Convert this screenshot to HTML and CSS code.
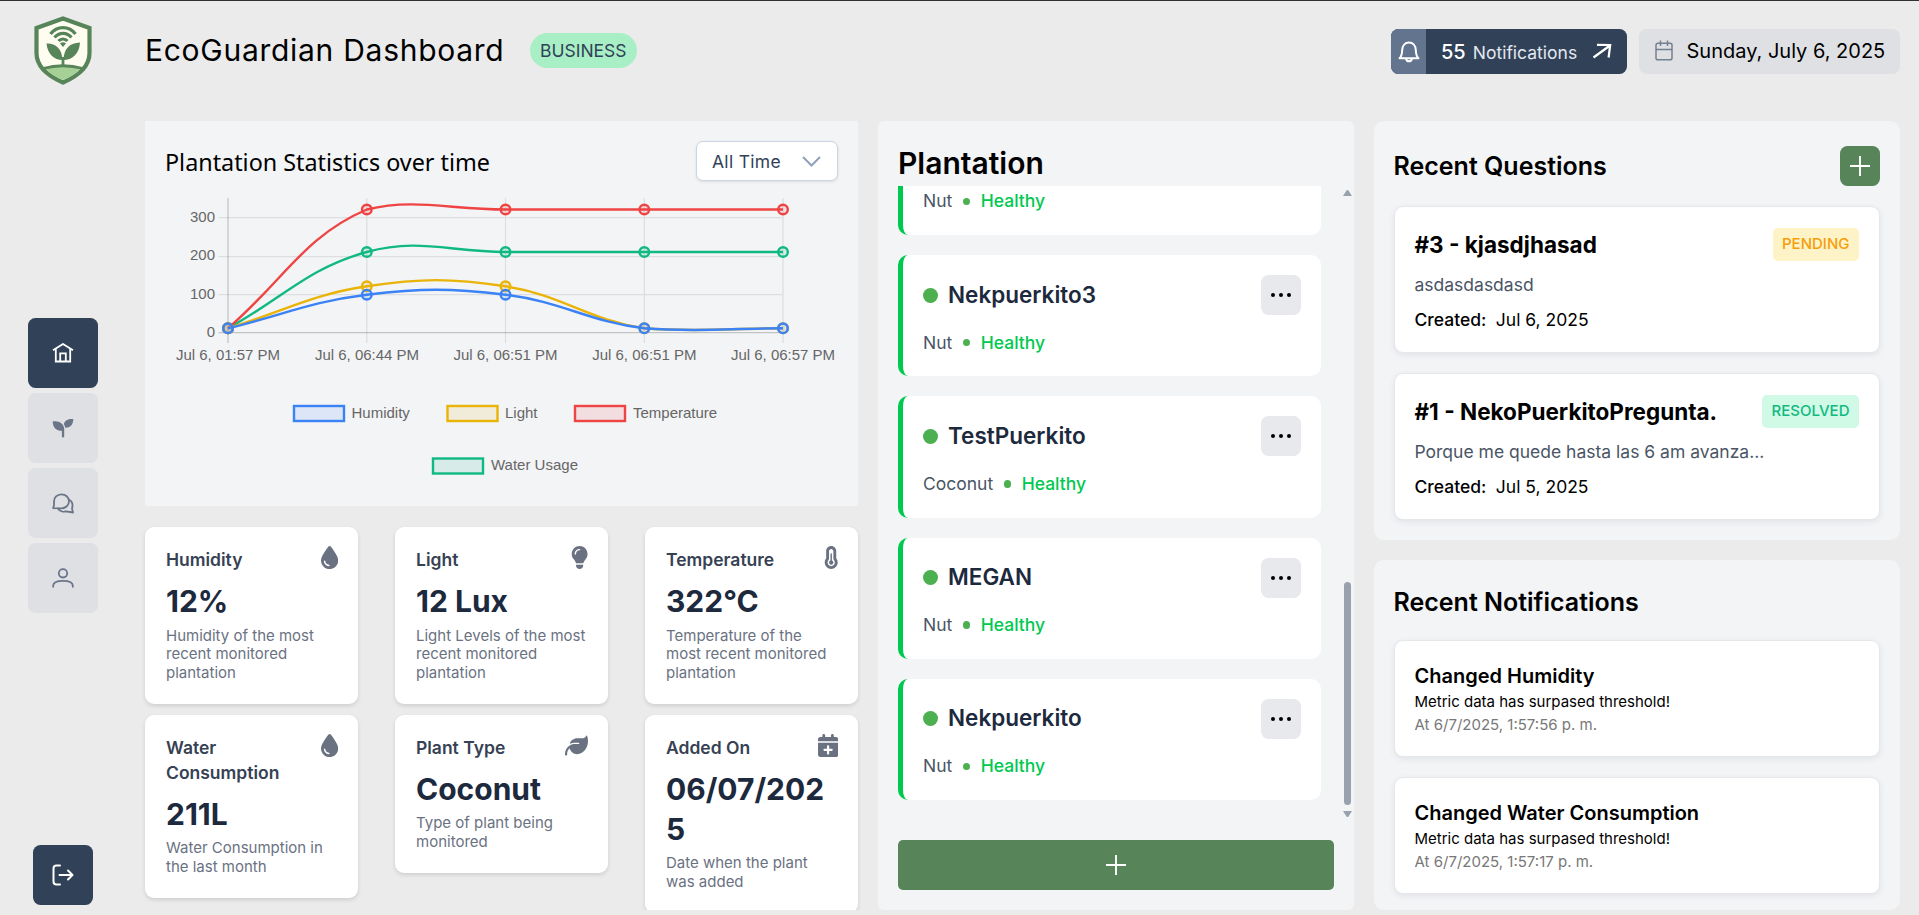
FILE: index.html
```html
<!DOCTYPE html>
<html lang="en">
<head>
<meta charset="utf-8">
<title>EcoGuardian Dashboard</title>
<link rel="stylesheet" href="styles.css">
</head>
<body>
<svg class="sprite" aria-hidden="true">
  <symbol id="drop" viewBox="0 0 384 512"><path d="M192 512C86 512 0 426 0 320C0 228.800 130.200 57.700 166.600 11.700C172.600 4.200 181.500 0 191.100 0h1.800c9.600 0 18.500 4.200 24.500 11.700C253.800 57.700 384 228.800 384 320c0 106-86 192-192 192zM96 336c0-8.800-7.200-16-16-16s-16 7.200-16 16c0 61.900 50.100 112 112 112c8.800 0 16-7.200 16-16s-7.200-16-16-16c-44.200 0-80-35.800-80-80z"/></symbol>
  <symbol id="bulb" viewBox="0 0 384 512"><path d="M272 384c9.600-31.900 29.500-59.100 49.200-86.200c5.200-7.100 10.400-14.200 15.400-21.400c19.800-28.500 31.400-63 31.400-100.300C368 78.800 289.200 0 192 0S16 78.800 16 176c0 37.300 11.600 71.900 31.400 100.300c5 7.200 10.200 14.300 15.400 21.400c19.800 27.100 39.700 54.400 49.200 86.200H272zM192 512c44.200 0 80-35.800 80-80V416H112v16c0 44.200 35.800 80 80 80zM112 176c0 8.800-7.200 16-16 16s-16-7.200-16-16c0-61.900 50.100-112 112-112c8.800 0 16 7.200 16 16s-7.200 16-16 16c-44.200 0-80 35.800-80 80z"/></symbol>
  <symbol id="thermo" viewBox="0 0 320 512"><path d="M160 64c-26.500 0-48 21.500-48 48V276.500c0 17.300-7.100 31.900-15.300 42.500C86.200 332.600 80 349.500 80 368c0 44.200 35.800 80 80 80s80-35.800 80-80c0-18.500-6.200-35.400-16.700-48.900c-8.200-10.600-15.300-25.200-15.300-42.500V112c0-26.500-21.500-48-48-48zM48 112C48 50.200 98.100 0 160 0s112 50.100 112 112V276.500c0 .1 .1 .3 .2 .6c.2 .6 .8 1.600 1.700 2.800c18.900 24.400 30.100 55 30.100 88.100c0 79.500-64.500 144-144 144S16 447.500 16 368c0-33.200 11.200-63.800 30.100-88.100c.9-1.200 1.500-2.200 1.700-2.800c.1-.3 .2-.5 .2-.6V112zM208 368c0 26.500-21.500 48-48 48s-48-21.500-48-48c0-20.900 13.400-38.700 32-45.300V176c0-8.800 7.200-16 16-16s16 7.200 16 16V322.700c18.600 6.600 32 24.400 32 45.300z"/></symbol>
  <symbol id="leaf" viewBox="0 0 512 512"><path d="M272 96c-78.600 0-145.100 51.500-167.700 122.500c33.600-17 71.500-26.500 111.700-26.500h88c8.800 0 16 7.200 16 16s-7.200 16-16 16H216c-16.600 0-32.700 1.900-48.200 5.400c-25.900 5.900-50 16.400-71.400 30.700C38.300 298.800 0 364.900 0 440v16c0 13.300 10.700 24 24 24s24-10.700 24-24V440c0-48.700 20.700-92.500 53.800-123.200C121.600 392.300 190.300 448 272 448h1c132.100-.7 239-130.900 239-291.400c0-42.600-7.500-83.100-21.100-119.600c-2.600-6.900-12.700-6.600-16.200-.1C455.900 72.100 418.700 96 376 96z"/></symbol>
  <symbol id="calplus" viewBox="0 0 448 512"><path d="M96 32V64H48C21.500 64 0 85.500 0 112v48H448V112c0-26.500-21.500-48-48-48H352V32c0-17.700-14.300-32-32-32s-32 14.300-32 32V64H160V32c0-17.700-14.300-32-32-32S96 14.300 96 32zM448 192H0V464c0 26.500 21.500 48 48 48H400c26.500 0 48-21.500 48-48V192zM224 248c13.300 0 24 10.700 24 24v56h56c13.300 0 24 10.700 24 24s-10.700 24-24 24H248v56c0 13.300-10.700 24-24 24s-24-10.700-24-24V376H144c-13.300 0-24-10.700-24-24s10.700-24 24-24h56V272c0-13.300 10.700-24 24-24z"/></symbol>
  <symbol id="dots" viewBox="0 0 22 6"><circle cx="3" cy="3" r="2"/><circle cx="11" cy="3" r="2"/><circle cx="19" cy="3" r="2"/></symbol>
  <symbol id="plus" viewBox="0 0 20 20"><path d="M10 0V20M0 10H20"/></symbol>
</svg>

<div class="app">
  <aside class="sidebar">
    <svg class="logo" viewBox="0 0 58 69">
      <path d="M29 2.500L55.500 12V37C55.500 51 44 60 29 66.500C14 60 2.500 51 2.500 37V12Z" fill="#fffdf0" stroke="#578459" stroke-width="4.200"/>
      <path d="M11 52.500Q29 48 47 52.500Q40 59.500 29 64Q18 59.500 11 52.500Z" fill="#a5d196"/>
      <path d="M9 52.500Q29 47 49 52.500" fill="none" stroke="#578459" stroke-width="2.800"/>
      <path d="M29 51V41" stroke="#578459" stroke-width="2.800"/>
      <path d="M28.500 44C20 44 13.500 38 12.500 27.500C21 27 28 32 28.500 44ZM29.500 44C38 44 45.500 38 46 26.500C36 27 30 32 29.500 44Z" fill="#578459"/>
      <g fill="none" stroke="#578459" stroke-width="3.200"><path d="M16.500 18C23 9.500 35 9.500 41.500 18"/><path d="M20.500 21.500C25 16 33 16 37.500 21.500"/><path d="M24.500 25C27 22.300 31 22.300 33.500 25"/></g>
      <path d="M29 31L26 27.500Q29 25 32 27.500Z" fill="#578459"/>
    </svg>
    <nav class="nav">
      <a class="nav-item active"><svg width="22" height="20" viewBox="0 0 22 20"><path d="M1 7.200L11 1L21 7.200M3.800 6V18.500H18.200V6M8.200 18.500V10.300H13.800V18.500"/></svg></a>
      <a class="nav-item filled"><svg width="22" height="20" viewBox="0 0 22 20"><path d="M.7 3.500C7 2.300 12 5.800 12.200 11V18.500Q12.200 19.500 11 19.500Q9.900 19.500 9.900 18.500V12.800C4.300 12.800.7 9.500.7 3.500ZM21.300 1C15.500.3 12.300 3 11.900 6.200Q13 7.800 13.200 9.800C18.500 9.700 21.200 6.500 21.300 1Z"/></svg></a>
      <a class="nav-item"><svg width="22" height="21" viewBox="0 0 22 21"><path d="M1.200 15.200L2 12V8.500A7.500 7 0 1 1 9.500 15.300Z"/><path d="M6 15.500C8 19 12 19 14 18.300L21 19.500L20 15.500C21.300 11.500 20 7.500 16.800 6.500"/></svg></a>
      <a class="nav-item"><svg width="22" height="20" viewBox="0 0 22 20"><circle cx="11" cy="5.300" r="4.200"/><path d="M1.200 18.800V17.500Q1.200 12.800 11 12.800T20.800 17.500V18.800"/></svg></a>
    </nav>
    <a class="logout"><svg width="22" height="22" viewBox="0 0 22 22"><path d="M8 1.500H4.500Q1.500 1.500 1.500 4.500V17.500Q1.500 20.500 4.500 20.500H8M7.500 11H20.500M16 6.500L20.500 11L16 15.500"/></svg></a>
  </aside>

  <main class="main">
    <header class="header">
      <h1 class="title">EcoGuardian Dashboard</h1>
      <span class="plan">BUSINESS</span>
      <div class="notif">
        <span class="notif-bell"><svg width="22" height="22" viewBox="0 0 22 22"><path d="M1.500 17.200H20.500C18 15 18 13 17.800 9C17.600 4.500 15 1.500 11 1.500S4.400 4.500 4.200 9C4 13 4 15 1.500 17.200Z"/><path d="M8 17.500Q8.500 20.300 11 20.300T14 17.500"/></svg></span>
        <span class="notif-count">55</span>
        <span class="notif-label">Notifications</span>
        <svg class="notif-arrow" width="20" height="18" viewBox="0 0 20 18"><path d="M1.500 15.500L18 3.500M5 2.800L18.200 3L16.600 15.500"/></svg>
      </div>
      <div class="date">
        <svg width="18" height="21" viewBox="0 0 18 21"><path d="M1 5Q1 3.300 3 3.300H15Q17 3.300 17 5V18Q17 19.800 15 19.800H3Q1 19.800 1 18ZM1 9.600H17M5.500 .5V6M12.500 .5V6"/></svg>
        <span>Sunday, July 6, 2025</span>
      </div>
    </header>

    <div class="columns">
      <section class="left">
        <div class="chart-panel">
          <div class="chart-head">
            <h2 class="chart-title">Plantation Statistics over time</h2>
            <div class="select"><span>All Time</span><svg width="19" height="11" viewBox="0 0 19 11"><path d="M1 1L9.500 9.500L18 1"/></svg></div>
          </div>
          <svg class="chart" viewBox="165 186 673 300" width="673" height="300">
            <g class="grid"><path d="M366.800 198V343M505.500 198V343M644.300 198V343M783 198V343M218.500 217.500H783M218.500 256.500H783M218.500 294.500H783"/><path class="axis" d="M228 198V343M218.500 332.500H783"/></g>
            <g class="series green"><path d="M228 328.300C283.500 297.800 307.600 268.300 366.800 252C418.600 237.700 450 252 505.500 252H783"/><circle cx="228" cy="328.300" r="4.800"/><circle cx="366.800" cy="252" r="4.800"/><circle cx="505.500" cy="252" r="4.800"/><circle cx="644.300" cy="252" r="4.800"/><circle cx="783" cy="252" r="4.800"/></g>
            <g class="series red"><path d="M228 328.300C283.500 280.700 303.700 236.400 366.800 209.500C414.700 198 450 209.500 505.500 209.500H783"/><circle cx="228" cy="328.300" r="4.800"/><circle cx="366.800" cy="209.500" r="4.800"/><circle cx="505.500" cy="209.500" r="4.800"/><circle cx="644.300" cy="209.500" r="4.800"/><circle cx="783" cy="209.500" r="4.800"/></g>
            <g class="series yellow"><path d="M228 328.300C283.500 311.500 310.100 294.900 366.800 286.300C421.100 278.100 451.200 278.100 505.500 286.300C562.200 294.900 587.600 319.700 644.300 328.300C698.600 332.500 727.500 328.300 783 328.300"/><circle cx="228" cy="328.300" r="4.800"/><circle cx="366.800" cy="286.300" r="4.800"/><circle cx="505.500" cy="286.300" r="4.800"/><circle cx="644.300" cy="328.300" r="4.800"/><circle cx="783" cy="328.300" r="4.800"/></g>
            <g class="series blue"><path d="M228 328.300C283.500 314.900 310.500 301.500 366.800 294.700C421.500 288.100 450.800 288.100 505.500 294.700C561.800 301.500 588 321.500 644.300 328.300C699 332.500 727.500 328.300 783 328.300"/><circle cx="228" cy="328.300" r="4.800"/><circle cx="366.800" cy="294.700" r="4.800"/><circle cx="505.500" cy="294.700" r="4.800"/><circle cx="644.300" cy="328.300" r="4.800"/><circle cx="783" cy="328.300" r="4.800"/></g>
            <g class="ticks end"><text x="215" y="222">300</text><text x="215" y="260.300">200</text><text x="215" y="299">100</text><text x="215" y="337.300">0</text></g>
            <g class="ticks mid"><text x="228" y="360">Jul 6, 01:57 PM</text><text x="367" y="360">Jul 6, 06:44 PM</text><text x="505.500" y="360">Jul 6, 06:51 PM</text><text x="644.300" y="360">Jul 6, 06:51 PM</text><text x="783" y="360">Jul 6, 06:57 PM</text></g>
            <g class="series blue"><rect x="294" y="406" width="50" height="15"/></g>
            <g class="series yellow"><rect x="447.500" y="406" width="50" height="15"/></g>
            <g class="series red"><rect x="575" y="406" width="50" height="15"/></g>
            <g class="series green"><rect x="433" y="458.500" width="50" height="15"/></g>
            <g class="ticks"><text x="351.500" y="418.300">Humidity</text><text x="505" y="418.300">Light</text><text x="633" y="418.300">Temperature</text><text x="491" y="470.300">Water Usage</text></g>
          </svg>
        </div>
        <div class="stats">
          <article class="stat"><div class="stat-head"><h3>Humidity</h3><svg width="17.250" height="23"><use href="#drop"/></svg></div><p class="value">12%</p><p class="desc">Humidity of the most recent monitored plantation</p></article>
          <article class="stat"><div class="stat-head"><h3>Light</h3><svg width="17.250" height="23"><use href="#bulb"/></svg></div><p class="value">12 Lux</p><p class="desc">Light Levels of the most recent monitored plantation</p></article>
          <article class="stat"><div class="stat-head"><h3>Temperature</h3><svg width="14.400" height="23"><use href="#thermo"/></svg></div><p class="value">322°C</p><p class="desc">Temperature of the most recent monitored plantation</p></article>
          <article class="stat"><div class="stat-head"><h3>Water Consumption</h3><svg width="17.250" height="23"><use href="#drop"/></svg></div><p class="value">211L</p><p class="desc">Water Consumption in the last month</p></article>
          <article class="stat"><div class="stat-head"><h3>Plant Type</h3><svg width="23" height="23"><use href="#leaf"/></svg></div><p class="value">Coconut</p><p class="desc">Type of plant being monitored</p></article>
          <article class="stat"><div class="stat-head"><h3>Added On</h3><svg width="20.200" height="23"><use href="#calplus"/></svg></div><p class="value">06/07/2025</p><p class="desc">Date when the plant was added</p></article>
        </div>
      </section>

      <section class="panel plantation">
        <h2 class="plantation-title">Plantation</h2>
        <div class="scroller">
          <div class="plants">
            <article class="plant"><div class="plant-head"></div><div class="plant-info"><span>Nut</span><i class="dot small"></i><b>Healthy</b></div></article>
            <article class="plant"><div class="plant-head"><i class="dot"></i><h3>Nekpuerkito3</h3><button class="more"><svg width="22" height="6"><use href="#dots"/></svg></button></div><div class="plant-info"><span>Nut</span><i class="dot small"></i><b>Healthy</b></div></article>
            <article class="plant"><div class="plant-head"><i class="dot"></i><h3>TestPuerkito</h3><button class="more"><svg width="22" height="6"><use href="#dots"/></svg></button></div><div class="plant-info"><span>Coconut</span><i class="dot small"></i><b>Healthy</b></div></article>
            <article class="plant"><div class="plant-head"><i class="dot"></i><h3>MEGAN</h3><button class="more"><svg width="22" height="6"><use href="#dots"/></svg></button></div><div class="plant-info"><span>Nut</span><i class="dot small"></i><b>Healthy</b></div></article>
            <article class="plant"><div class="plant-head"><i class="dot"></i><h3>Nekpuerkito</h3><button class="more"><svg width="22" height="6"><use href="#dots"/></svg></button></div><div class="plant-info"><span>Nut</span><i class="dot small"></i><b>Healthy</b></div></article>
          </div>
          <div class="scrollbar"><svg width="9" height="6" viewBox="0 0 9 6"><path d="M0 6L3.500 .5Q4.500-.5 5.500 .5L9 6Z"/></svg><i class="thumb"></i><svg width="9" height="6" viewBox="0 0 9 6"><path d="M0 0L3.500 5.500Q4.500 6.500 5.500 5.500L9 0Z"/></svg></div>
        </div>
        <button class="add-wide"><svg width="20" height="20"><use href="#plus"/></svg></button>
      </section>

      <section class="right">
        <div class="panel questions">
          <div class="questions-head"><h2>Recent Questions</h2><button class="add"><svg width="20" height="20"><use href="#plus"/></svg></button></div>
          <article class="card question"><div class="q-head"><h3>#3 - kjasdjhasad</h3><span class="badge pending">PENDING</span></div><p class="q-text">asdasdasdasd</p><p class="q-date"><b>Created:</b>Jul 6, 2025</p></article>
          <article class="card question"><div class="q-head"><h3>#1 - NekoPuerkitoPregunta.</h3><span class="badge resolved">RESOLVED</span></div><p class="q-text">Porque me quede hasta las 6 am avanza...</p><p class="q-date"><b>Created:</b>Jul 5, 2025</p></article>
        </div>
        <div class="panel notifications">
          <h2>Recent Notifications</h2>
          <article class="card note"><h3>Changed Humidity</h3><p>Metric data has surpased threshold!</p><p class="when">At 6/7/2025, 1:57:56 p. m.</p></article>
          <article class="card note"><h3>Changed Water Consumption</h3><p>Metric data has surpased threshold!</p><p class="when">At 6/7/2025, 1:57:17 p. m.</p></article>
        </div>
      </section>
    </div>
  </main>
</div>
</body>
</html>
```
FILE: styles.css
```css
* { box-sizing: border-box; margin: 0; padding: 0; }
body { background: #ebebeb; color: #000; font-family: Inter, "Liberation Sans", sans-serif; overflow: hidden; }
.sprite { display: none; }
svg { display: block; flex: none; }
button { border: 0; font: inherit; }

.app { display: flex; width: 1919px; height: 915px; border-top: 1px solid #333033; }

/* Sidebar */
.sidebar { width: 126px; display: flex; flex-direction: column; align-items: center; padding: 15px 0 10px; }
.logo { width: 58px; height: 69px; }
.nav { display: flex; flex-direction: column; gap: 5px; margin-top: 233px; }
.nav-item, .logout { display: flex; align-items: center; justify-content: center; width: 70px; height: 70px; border-radius: 7.5px; background: #dee0e4; fill: none; stroke: #6b7588; stroke-width: 1.8; stroke-linecap: round; stroke-linejoin: round; }
.nav-item svg, .logout svg { margin-left: -1px; }
.nav-item.active { background: #314158; stroke: #fff; stroke-linecap: butt; stroke-linejoin: miter; }
.nav-item.filled { fill: #6b7588; stroke: none; }
.logout { width: 60px; height: 60px; margin-top: auto; background: #314158; stroke: #fff; stroke-width: 2; }

/* Header */
.main { flex: 1; display: flex; flex-direction: column; padding: 0 19px 5px 19px; }
.header { height: 120px; display: flex; align-items: flex-start; padding-top: 28px; }
.title { font-size: 30px; font-weight: 400; line-height: 45px; letter-spacing: .72px; margin-top: -1px; width: 385px; }
.plan { height: 35px; margin-top: 4px; padding: 0 10px; border-radius: 18px; background: #a9efc5; color: #314158; font-size: 17.500px; line-height: 35px; }
.notif { display: flex; align-items: center; height: 45px; width: 236px; margin-left: auto; border-radius: 7.500px; background: #314158; color: #fff; overflow: hidden; }
.notif-bell { display: flex; align-items: center; justify-content: center; width: 35px; height: 45px; background: #62748e; fill: none; stroke: #fff; stroke-width: 2; stroke-linejoin: round; }
.notif-count { margin-left: 15px; font-size: 20px; font-weight: 500; line-height: 44px; }
.notif-label { margin-left: 7px; font-size: 17.500px; color: #e2e8f0; padding-top: 1px; }
.notif-arrow { margin: -2px 15px 0 auto; fill: none; stroke: #fff; stroke-width: 2.200; }
.date { display: flex; align-items: center; gap: 13.500px; width: 261px; height: 45px; margin-left: 12px; padding-left: 16px; border-radius: 7.500px; background: #dee0e4; font-size: 20px; line-height: 24px; white-space: nowrap; }
.date span { padding-bottom: 1px; }
.date svg { fill: none; stroke: #75808f; stroke-width: 1.500; margin-top: -2px; }

.columns { flex: 1; min-height: 0; display: grid; grid-template-columns: 713px 476px 526px; gap: 20px; }
.panel { background: #f3f4f6; }

/* Chart */
.left { min-height: 0; overflow-y: clip; overflow-x: visible; }
.chart-panel { height: 385px; padding: 20px 20px 0; background: #f3f4f6; }
.chart-head { display: flex; justify-content: space-between; height: 40px; margin-bottom: 5px; }
.chart-title { font: 400 23.350px/42px "Noto Sans", "Open Sans", sans-serif; padding-top: 0; white-space: nowrap; }
.select { display: flex; align-items: center; justify-content: space-between; width: 142px; height: 40px; padding: 0 16px 0 15px; border: 1px solid #cad5e2; border-radius: 7px; background: #fff; box-shadow: 0 1px 3px rgba(0, 0, 0, .1); color: #314158; font-size: 17.500px; letter-spacing: .3px; }
.select svg { fill: none; stroke: #90a1b9; stroke-width: 2; }
.grid { fill: none; stroke: rgba(0, 0, 0, .09); stroke-width: 1.250; }
.grid .axis { stroke: rgba(0, 0, 0, .2); }
.series { stroke-width: 2.400; }
.series path { fill: none; }
.blue { stroke: #3b82f6; fill: rgba(59, 130, 246, .12); }
.yellow { stroke: #eab308; fill: rgba(234, 179, 8, .12); }
.red { stroke: #ef4444; fill: rgba(239, 68, 68, .12); }
.green { stroke: #10b981; fill: rgba(16, 185, 129, .12); }
.ticks { fill: #666; font: 15px "Liberation Sans", Arial, sans-serif; }
.ticks.mid { text-anchor: middle; }
.ticks.end { text-anchor: end; }

/* Metric cards */
.stats { display: grid; grid-template-columns: repeat(3, 213px); justify-content: space-between; align-items: start; gap: 10.500px 0; margin-top: 21px; }
.stat { padding: 20px 20px 21px 21px; border-radius: 9px; background: #fff; box-shadow: 0 2px 4px rgba(0, 0, 0, .12); }
.stat-head { display: flex; justify-content: space-between; }
.stat-head h3 { font-size: 17.500px; font-weight: 600; line-height: 25px; color: #364153; }
.stat-head svg { fill: #6a7282; margin-top: -1px; }
.value { margin-top: 9px; font-size: 30px; font-weight: 700; line-height: 40px; color: #1d293d; overflow-wrap: anywhere; }
.desc { margin-top: 5.500px; font-size: 15px; line-height: 18.750px; color: #6a7282; padding-bottom: .5px; }

/* Plantation list */
.plantation { display: flex; flex-direction: column; padding: 0 0 20px 20px; border-radius: 6px; min-height: 0; }
.plantation-title { height: 65px; padding-top: 22px; font-size: 30px; font-weight: 600; line-height: 40px; }
.scroller { display: flex; height: 634px; overflow: hidden; }
.plants { width: 423px; display: flex; flex-direction: column; gap: 20px; margin-top: -72.250px; }
.plant { flex: none; height: 121.250px; padding: 20px; border-left: 5px solid #00c950; border-radius: 10px; background: #fff; }
.plant-head { display: flex; align-items: center; gap: 10px; height: 40px; }
.plant-head h3 { font-size: 22.500px; font-weight: 600; line-height: 28px; color: #1d293d; padding-bottom: 1px; }
.dot { width: 15px; height: 15px; border-radius: 50%; background: #4caf50; }
.dot.small { width: 7.500px; height: 7.500px; }
.more { display: flex; align-items: center; justify-content: center; width: 40px; height: 40px; margin-left: auto; border-radius: 7.500px; background: #e8e9ed; }
.more svg { margin-left: -1px; }
.plant-info { display: flex; align-items: center; gap: 10.500px; margin-top: 14.500px; height: 26px; font-size: 17.500px; line-height: 26px; color: #4a5565; }
.plant-info b { font-weight: 500; color: #00c950; }
.scrollbar { display: flex; flex-direction: column; align-items: center; width: 9px; height: 631px; margin-left: 22px; padding: 4px 0 0; fill: #99a1af; }
.thumb { width: 7px; height: 223px; margin: auto 0 6px; border-radius: 4px; background: #99a1af; }
.add-wide, .add { display: flex; align-items: center; justify-content: center; background: #578459; fill: none; stroke: #fff; stroke-width: 1.900; }
.add-wide { width: 436px; height: 50px; margin-top: auto; border-radius: 5px; }
.add { width: 40px; height: 40px; border-radius: 7.500px; }

/* Right column */
.right { display: flex; flex-direction: column; gap: 20px; }
.right .panel { padding: 0 20px 0 19.500px; border-radius: 10px; display: flex; flex-direction: column; }
.right h2 { font-size: 25px; font-weight: 600; }
.questions { height: 419px; }
.questions-head { display: flex; align-items: center; justify-content: space-between; height: 40px; margin: 25px 0 20px; }
.card { border: 1px solid #e5e7eb; border-radius: 9px; background: #fff; box-shadow: 0 2px 6px rgba(50, 60, 90, .09); }
.question { height: 147px; padding: 21px 20px 0; }
.question + .question { margin-top: 20px; }
.q-head { display: flex; align-items: center; justify-content: space-between; height: 33px; }
.q-head h3 { font-size: 22.500px; font-weight: 700; }
.badge { height: 33px; padding: 0 9.500px; border-radius: 5px; font-size: 15px; font-weight: 500; line-height: 32px; }
.pending { background: #fef3c6; color: #f59e0b; }
.resolved { background: #d0fae5; color: #10b981; }
.q-text { margin-top: 11px; font-size: 17.500px; line-height: 26px; color: #4a5565; }
.q-date { display: flex; gap: 9.500px; margin-top: 9px; font-size: 17.500px; line-height: 26px; }
.q-date b { font-weight: 500; }
.notifications { flex: 1; }
.notifications h2 { height: 80px; padding-top: 26px; line-height: 32px; }
.note { height: 117px; padding: 20px; }
.note + .note { margin-top: 20px; }
.note h3 { font-size: 20px; font-weight: 600; line-height: 30px; }
.note p { font-size: 15px; line-height: 22px; }
.note .when { line-height: 24px; color: #787878; }
```
